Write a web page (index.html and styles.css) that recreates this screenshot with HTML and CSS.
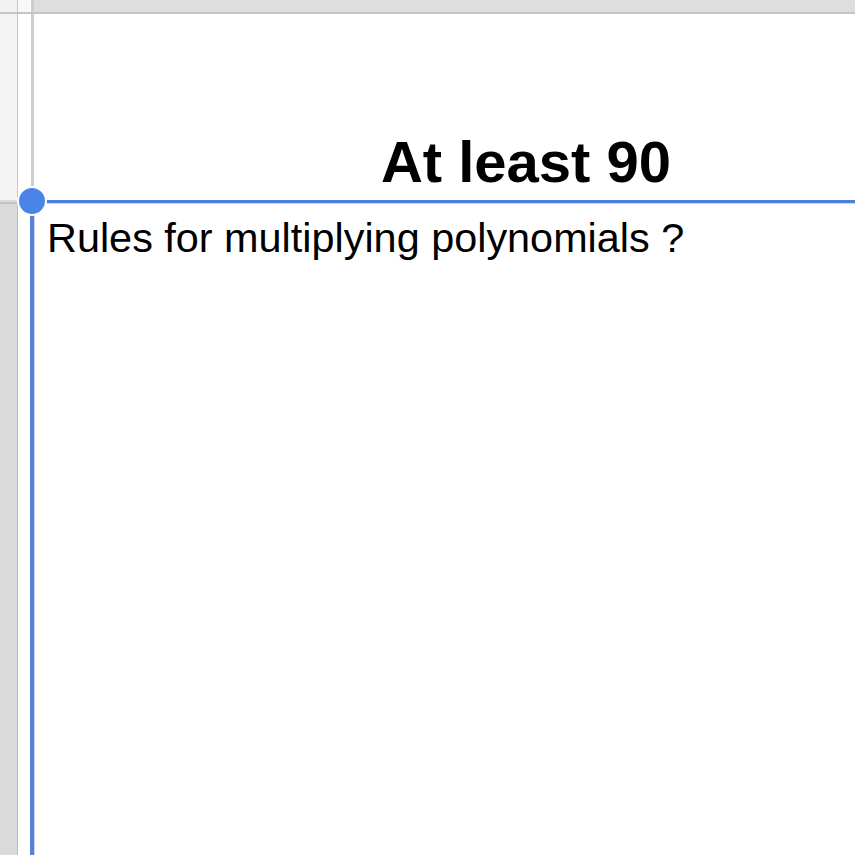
FILE: index.html
```html
<!DOCTYPE html>
<html>
<head>
    <title>Sheet</title>
    <link rel="stylesheet" href="styles.css">
</head>
<body>
    <div class="sheet">
        <!-- column headers -->
        <div class="corner"></div>
        <div class="vline"></div>
        <div class="col-head"></div>
        <div class="vline-thick"></div>
        <div class="col-head selected"></div>

        <div class="hline"></div>

        <!-- row 1 -->
        <div class="row-head"></div>
        <div class="vline"></div>
        <div class="cell"></div>
        <div class="vline-thick"></div>
        <div class="cell title-cell">At least 90</div>

        <!-- row 2 -->
        <div class="row-head selected">
            <div class="row-sep"></div>
        </div>
        <div class="vline dark"></div>
        <div class="cell"></div>
        <div class="cell active-cell">
            <div class="cell-text">Rules for multiplying polynomials ?</div>
            <div class="handle"></div>
        </div>
    </div>
</body>
</html>
```

FILE: styles.css
```css
html, body {
    margin: 0;
    padding: 0;
    overflow: hidden;
    background-color: white;
}

body {
    font-family: "Liberation Sans", Arial, sans-serif;
    color: #000000;
}

.sheet {
    display: grid;
    grid-template-columns: 17px 1px 12px 4px 1fr;
    grid-template-rows: 12px 2px 186px 1fr;
    height: 100vh;
}

.corner {
    background-color: #f1f1f1;
}

.col-head {
    background-color: #f8f8f8;
}

.col-head.selected {
    background-color: #dedede;
}

.vline {
    background-color: #c6c6c6;
}

.vline.dark {
    background-color: #bcbcbc;
}

.vline-thick {
    background-color: #ffffff;
    border-right: 3px solid #cdcdcd;
}

.hline {
    grid-column: 1 / -1;
    background-color: #c4c4c4;
}

.row-head {
    background-color: #f3f3f3;
}

.row-head.selected {
    background-color: #dadada;
}

/* line between row headers */
.row-sep {
    height: 2px;
    margin-top: 2px;
    background-color: #c2c2c2;
}

.cell {
    background-color: #ffffff;
}

.title-cell {
    display: flex;
    align-items: flex-end;
    justify-content: center;
    font-size: 58px;
    font-weight: bold;
    line-height: 1;
    padding-left: 163px;
    padding-bottom: 9px;
    box-sizing: border-box;
    white-space: nowrap;
}

/* selected cell: blue border top and left */
.active-cell {
    grid-column: 4 / 6;
    position: relative;
    border-top: 3px solid #4f7fdc;
    border-left: 4px solid #5a80d8;
    box-shadow: inset 1px 1px 0 #c9d6f3;
}

.cell-text {
    font-size: 41.4px;
    line-height: 1;
    padding-top: 15px;
    padding-left: 13px;
    white-space: nowrap;
}

.handle {
    position: absolute;
    top: -17px;
    left: -17px;
    width: 26px;
    height: 26px;
    border-radius: 50%;
    background-color: #4a84e6;
    border: 2px solid #ffffff;
}
```
